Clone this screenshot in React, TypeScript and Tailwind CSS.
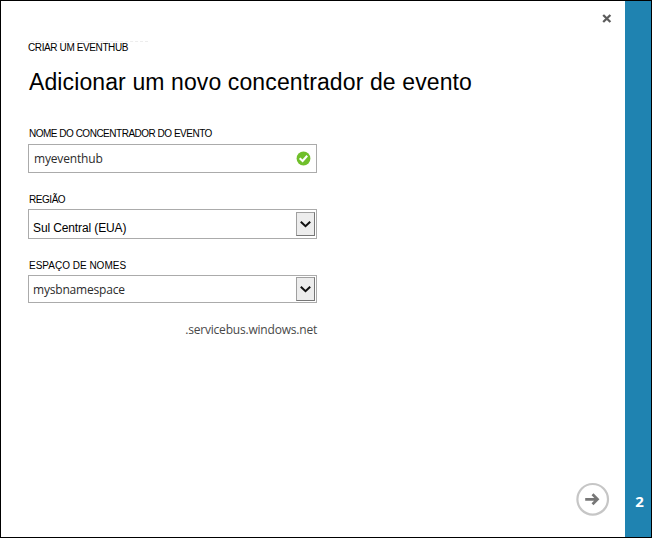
import React from "react";

function Label({ children, className = "" }: { children: React.ReactNode; className?: string }) {
  return (
    <div className={`ml-px h-3 whitespace-nowrap text-[10px] leading-3 text-black ${className}`}>{children}</div>
  );
}

function SelectButton() {
  return (
    <button className="flex h-6 w-[19px] items-center justify-center border border-[#a0a0a0] border-r-[#777] border-b-[#777] bg-[#ededed]">
      <svg width="13" height="9" viewBox="0 0 13 9" fill="none">
        <path d="M1.8 1.7 L6.5 6.2 L11.2 1.7" stroke="#111" strokeWidth="2" />
      </svg>
    </button>
  );
}

export default function App() {
  return (
    <div className="flex h-[538px] w-[652px] border border-black bg-white font-['Liberation_Sans',Arial,sans-serif]">
      <main className="flex min-w-0 flex-1 flex-col pl-[27px]">
        <header className="flex h-[35px] justify-end pr-[13px] pt-[13px]">
          <button className="h-[9px] w-[10px]" aria-label="Fechar">
            <svg width="10" height="9" viewBox="0 0 10 9" fill="none">
              <path d="M1.2 1 L8.4 8 M8.4 1 L1.2 8" stroke="#5c5c5c" strokeWidth="2.3" />
            </svg>
          </button>
        </header>

        <div className="mt-[5px] ml-[3px] h-px w-[117px] border-t border-dashed border-[#ededed]" />
        <div className="h-3 whitespace-nowrap text-[10px] leading-3 tracking-[-0.39px] text-black">
          CRIAR UM EVENTHUB
        </div>
        <h1 className="mt-[14px] ml-px h-7 whitespace-nowrap text-[23px] leading-7 tracking-[0.11px] text-black">
          Adicionar um novo concentrador de evento
        </h1>

        <div className="mt-8 w-[289px]">
          <Label className="tracking-[-0.49px]">NOME DO CONCENTRADOR DO EVENTO</Label>
          <div className="mt-1 flex h-[29px] items-center justify-between border border-[#ababab] pl-[5px] pr-[5px]">
            <span className="mt-px font-['Open_Sans',sans-serif] text-[12px] tracking-[-0.17px] text-[#2b2b2b]">
              myeventhub
            </span>
            <svg width="15" height="15" viewBox="0 0 15 15" fill="none">
              <circle cx="7.5" cy="7.5" r="6.9" fill="#70bf2b" />
              <path d="M3.7 7.2 L6.6 10 L11.2 4.8" stroke="white" strokeWidth="2.1" />
            </svg>
          </div>

          <Label className="mt-[21px] tracking-[-0.45px]">REGIÃO</Label>
          <div className="mt-[3px] flex h-[30px] items-center justify-between border border-[#ababab] pl-[4px] pr-[1px]">
            <span className="mt-[7px] text-[12px] tracking-[-0.12px] text-black">Sul Central (EUA)</span>
            <SelectButton />
          </div>

          <Label className="mt-[21px]">ESPAÇO DE NOMES</Label>
          <div className="mt-[3px] flex h-[28px] items-center justify-between border border-[#ababab] pl-[4px] pr-[1px]">
            <span className="mt-[2px] font-['Open_Sans',sans-serif] text-[12px] tracking-[-0.19px] text-[#2b2b2b]">
              mysbnamespace
            </span>
            <SelectButton />
          </div>
          <div className="mt-[19px] text-right font-['Open_Sans',sans-serif] text-[12px] leading-4 tracking-[-0.2px] text-[#484848]">
            .servicebus.windows.net
          </div>
        </div>

        <footer className="mt-auto flex justify-end pr-[15px] pb-[21px]">
          <button aria-label="Seguinte">
            <svg width="34" height="34" viewBox="0 0 34 34" fill="none">
              <circle cx="16.7" cy="17.3" r="15.3" stroke="#c6c6c6" strokeWidth="2.2" />
              <path d="M9.2 17.3 H21.7 M16.5 12.3 L21.5 17.3 L16.5 22.3" stroke="#777" strokeWidth="2.7" />
            </svg>
          </button>
        </footer>
      </main>
      <aside className="flex w-[26px] items-end justify-center bg-[#1f83b1] pb-[26px] pl-[3px] font-['Open_Sans',sans-serif] text-[15px] leading-5 font-bold text-white">
        2
      </aside>
    </div>
  );
}
